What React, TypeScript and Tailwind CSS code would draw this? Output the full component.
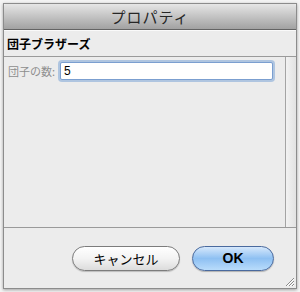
import { useState } from 'react';

const jp = '"Noto Sans CJK JP", "Liberation Sans", sans-serif';

export default function App() {
  const [count, setCount] = useState('5');

  return (
    <div className="w-[300px] h-[292px] bg-[#f4f4f4] pt-[3px] pl-[3px]" style={{ fontFamily: jp }}>
      <div className="w-[294px] h-[286px] flex flex-col bg-[#ececec] border border-[#8c8c8c] shadow-[0_1px_3px_rgba(0,0,0,0.35)]">
        {/* Title bar */}
        <div className="h-[26px] shrink-0 flex items-center justify-center bg-gradient-to-b from-[#e6e6e6] to-[#a2a2a2] border-b border-[#646464] rounded-t-[3px]">
          <span className="text-[15px] leading-none text-[#262626] tracking-[1px]">プロパティ</span>
        </div>

        {/* Section header */}
        <div className="h-[26px] shrink-0 flex items-center pl-[3px] border-t border-[#fafafa]">
          <span className="text-[12px] font-bold text-black leading-none">団子ブラザーズ</span>
        </div>

        {/* Property panel */}
        <div className="h-[172px] shrink-0 flex border-t border-b border-[#9a9a9a]">
          <div className="flex-1 pt-[5px] pl-[4px]">
            <div className="flex items-center gap-[3px]">
              <span className="text-[11px] text-[#8e8e8e] w-[49px]">団子の数:</span>
              <div className="w-[213px] h-[18px] rounded-[2px] border border-[#7b9fd0] shadow-[0_0_0_2px_rgba(125,165,215,0.55)] bg-white flex items-center">
                <input
                  value={count}
                  onChange={(e) => setCount(e.target.value)}
                  className="w-full h-full bg-transparent outline-none px-[3px] text-[12px] text-black"
                  style={{ fontFamily: '"Liberation Sans", sans-serif' }}
                />
              </div>
            </div>
          </div>
          <div className="w-[11px] border-l border-[#a4a4a4] bg-gradient-to-r from-[#f2f2f2] to-[#e2e2e2]" />
        </div>

        {/* Buttons */}
        <div className="flex-1 flex items-start justify-end pt-[18px] pr-[22px] gap-[12px] relative">
          <button className="w-[108px] h-[25px] rounded-full border border-[#7c7c7c] bg-gradient-to-b from-white via-[#f3f3f3] to-[#dcdcdc] shadow-[0_1px_1px_rgba(0,0,0,0.2)] text-[13px] text-black">
            キャンセル
          </button>
          <button
            className="w-[82px] h-[25px] rounded-full border border-[#4a6a9e] bg-gradient-to-b from-[#d6e8fb] via-[#8ec0f2] to-[#b9dcfb] shadow-[0_1px_1px_rgba(0,0,0,0.25)] text-[14px] text-black font-bold"
            style={{ fontFamily: '"Liberation Sans", sans-serif' }}
          >
            OK
          </button>
          <svg className="absolute right-[1px] bottom-[1px]" width="12" height="12" viewBox="0 0 12 12">
            <path d="M11 3 L3 11 M11 6 L6 11 M11 9 L9 11" stroke="#8a8a8a" strokeWidth="1" />
            <path d="M11 4 L4 11 M11 7 L7 11 M11 10 L10 11" stroke="#ffffff" strokeWidth="1" />
          </svg>
        </div>
      </div>
    </div>
  );
}
